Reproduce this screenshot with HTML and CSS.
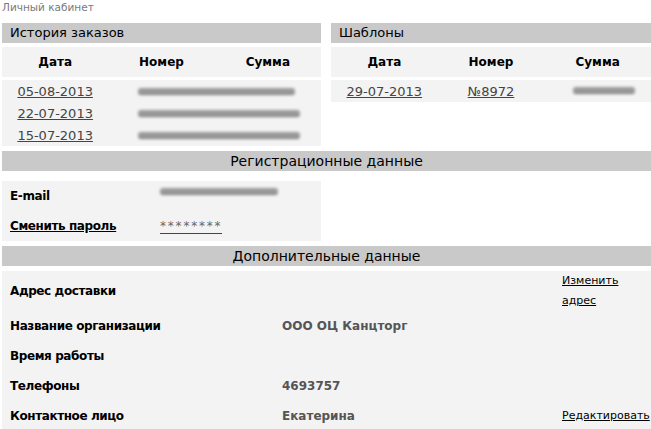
FILE: index.html
```html
<!DOCTYPE html>
<html lang="ru">

<head>
  <meta charset="UTF-8">
  <meta name="viewport" content="width=device-width, initial-scale=1.0">
  <title>Личный кабинет</title>
  <link rel="stylesheet" href="styles.css">
</head>

<body>
  <div class="page">
    <div class="crumb">Личный кабинет</div>

    <div class="top">
      <section class="box">
        <h2 class="bar">История заказов</h2>
        <div class="cols head"><span>Дата</span><span>Номер</span><span>Сумма</span></div>
        <div class="rows">
          <div class="cols"><a href="#">05-08-2013</a><span class="blur span-2 short"></span></div>
          <div class="cols"><a href="#">22-07-2013</a><span class="blur span-2"></span></div>
          <div class="cols"><a href="#">15-07-2013</a><span class="blur span-2"></span></div>
        </div>
      </section>

      <section class="box">
        <h2 class="bar">Шаблоны</h2>
        <div class="cols head"><span>Дата</span><span>Номер</span><span>Сумма</span></div>
        <div class="rows">
          <div class="cols"><a href="#">29-07-2013</a><a href="#">№8972</a><span class="blur sum"></span></div>
        </div>
      </section>
    </div>

    <h2 class="bar center">Регистрационные данные</h2>
    <div class="reg">
      <div class="line"><b>E-mail</b><span class="blur mail"></span></div>
      <div class="line"><a href="#" class="strong">Сменить пароль</a><a href="#" class="pass">********</a></div>
    </div>

    <h2 class="bar center">Дополнительные данные</h2>
    <div class="extra">
      <div class="line"><b>Адрес доставки</b><span></span><a href="#" class="act">Изменить адрес</a></div>
      <div class="line"><b>Название организации</b><span class="val">ООО ОЦ Канцторг</span><span></span></div>
      <div class="line"><b>Время работы</b><span></span><span></span></div>
      <div class="line"><b>Телефоны</b><span class="val">4693757</span><span></span></div>
      <div class="line"><b>Контактное лицо</b><span class="val">Екатерина</span><a href="#" class="act">Редактировать</a></div>
    </div>
  </div>
</body>

</html>
```

FILE: styles.css
```css
html,
body {
  margin: 0;
  font-size: 12px;
  font-family: "DejaVu Sans", Verdana, sans-serif;
  background: white;
  color: #000;
}

.page {
  padding-left: 2px;
  overflow: hidden;
}

.crumb {
  height: 15px;
  line-height: 15px;
  margin-bottom: 8px;
  font-size: 10.5px;
  color: #7a7a7a;
}

.top {
  display: grid;
  grid-template-columns: 319px 320px;
  column-gap: 10px;
  align-items: start;
  margin-bottom: 5px;
}

.bar {
  margin: 0;
  height: 20px;
  line-height: 20px;
  padding-left: 8px;
  background: #c9c9c9;
  font-size: 13px;
  font-weight: normal;
}

.bar.center {
  padding-left: 0;
  text-align: center;
  font-size: 14px;
}

.box .bar {
  margin-bottom: 4px;
}

.cols {
  display: grid;
  grid-template-columns: 1fr 1fr 1fr;
  align-items: center;
  justify-items: center;
}

.head {
  height: 30px;
  margin-bottom: 3px;
  background: #f3f3f3;
  font-weight: bold;
}

.rows {
  background: #f3f3f3;
}

.rows .cols {
  height: 22px;
  font-size: 13px;
}

a {
  color: #444;
}

.blur {
  display: block;
  height: 6px;
  background: #8a8a8a;
  border-bottom: 1px solid #555;
  border-radius: 3px;
  filter: blur(1.4px);
  opacity: 0.85;
}

.span-2 {
  grid-column: 2 / 4;
  justify-self: stretch;
  margin: 0 21px 0 30px;
}

.span-2.short {
  margin-right: 26px;
}

.sum {
  width: 62px;
  margin-left: 12px;
  margin-bottom: 2px;
}

.reg {
  width: 311px;
  margin-top: 10px;
  margin-bottom: 5px;
  padding-left: 8px;
  background: #f3f3f3;
}

.reg .line {
  display: grid;
  grid-template-columns: 150px 1fr;
  align-items: center;
  height: 30px;
}

b,
.strong {
  letter-spacing: -0.4px;
}

.mail {
  width: 118px;
  margin-bottom: 10px;
}

.strong {
  color: #000;
  font-weight: bold;
}

.pass {
  justify-self: start;
  color: #666;
  text-decoration: none;
  letter-spacing: 1.8px;
  border-bottom: 1px solid #444;
  line-height: 14px;
}

.extra {
  margin-top: 5px;
  padding-left: 8px;
  background: #f3f3f3;
}

.extra .line {
  display: grid;
  grid-template-columns: 272px 280px 1fr;
  align-items: center;
  min-height: 30px;
  line-height: 20px;
}

.val {
  color: #555;
  font-weight: bold;
}

.act {
  color: #000;
  font-size: 11px;
}
```
